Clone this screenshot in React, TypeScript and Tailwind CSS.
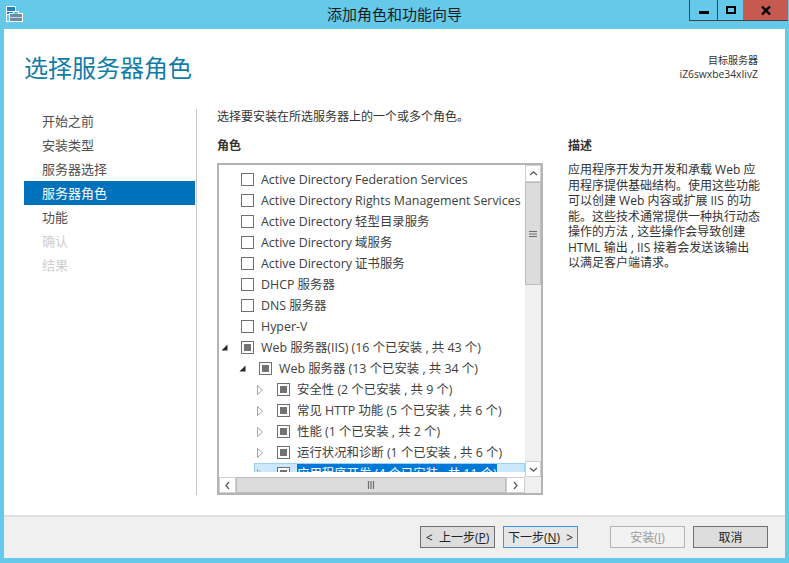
import React from 'react';

const NAV = [
  { label: '开始之前', state: 'normal' },
  { label: '安装类型', state: 'normal' },
  { label: '服务器选择', state: 'normal' },
  { label: '服务器角色', state: 'active' },
  { label: '功能', state: 'normal' },
  { label: '确认', state: 'disabled' },
  { label: '结果', state: 'disabled' },
];

type Role = { label: string; level: 0 | 1 | 2; mark?: boolean; arrow?: 'open' | 'closed'; selected?: boolean };

const ROLES: Role[] = [
  { label: 'Active Directory Federation Services', level: 0 },
  { label: 'Active Directory Rights Management Services', level: 0 },
  { label: 'Active Directory 轻型目录服务', level: 0 },
  { label: 'Active Directory 域服务', level: 0 },
  { label: 'Active Directory 证书服务', level: 0 },
  { label: 'DHCP 服务器', level: 0 },
  { label: 'DNS 服务器', level: 0 },
  { label: 'Hyper-V', level: 0 },
  { label: 'Web 服务器(IIS) (16 个已安装 , 共 43 个)', level: 0, mark: true, arrow: 'open' },
  { label: 'Web 服务器 (13 个已安装 , 共 34 个)', level: 1, mark: true, arrow: 'open' },
  { label: '安全性 (2 个已安装 , 共 9 个)', level: 2, mark: true, arrow: 'closed' },
  { label: '常见 HTTP 功能 (5 个已安装 , 共 6 个)', level: 2, mark: true, arrow: 'closed' },
  { label: '性能 (1 个已安装 , 共 2 个)', level: 2, mark: true, arrow: 'closed' },
  { label: '运行状况和诊断 (1 个已安装 , 共 6 个)', level: 2, mark: true, arrow: 'closed' },
  { label: '应用程序开发 (4 个已安装 , 共 11 个)', level: 2, mark: true, arrow: 'closed', selected: true },
];

function ServerIcon() {
  return (
    <svg width="17" height="16" viewBox="0 0 17 16" className="shrink-0">
      <rect x="0" y="0" width="10" height="16" fill="#ffffff" />
      <rect x="1" y="1" width="8" height="4" fill="#1b7fc4" />
      <rect x="1" y="6" width="8" height="2" fill="#1b7fc4" />
      <rect x="1" y="9" width="2" height="6" fill="#65c9ea" />
      <rect x="3" y="7" width="14" height="9" fill="#ffffff" />
      <rect x="7" y="5" width="6" height="3" fill="#ffffff" />
      <rect x="8" y="6" width="4" height="2" fill="#65c9ea" />
      <rect x="4" y="8" width="12" height="7" fill="#6d8ba5" />
      <rect x="4" y="11" width="12" height="1" fill="#c9d5de" />
    </svg>
  );
}

function TreeArrow({ kind }: { kind: 'open' | 'closed' }) {
  if (kind === 'open') {
    return (
      <svg width="7" height="7" viewBox="0 0 7 7">
        <path d="M6.5 0.5V6.5H0.5Z" fill="#262626" />
      </svg>
    );
  }
  return (
    <svg width="6" height="10" viewBox="0 0 6 10">
      <path d="M0.5 0.5L5.5 5L0.5 9.5Z" fill="#ffffff" stroke="#a6a6a6" />
    </svg>
  );
}

function RoleRow({ role }: { role: Role }) {
  const pad = role.level === 0 ? 'pl-[2px]' : role.level === 1 ? 'pl-[20px]' : 'pl-[38px]';
  return (
    <div className={`relative flex h-[21px] shrink-0 items-center whitespace-nowrap ${pad}`}>
      {role.selected && <div className="absolute inset-y-0 left-[35px] right-0 border border-[#99d1ff] bg-[#cce8ff]" />}
      <span className="relative flex w-[20px] shrink-0 items-center justify-start">
        {role.arrow && <TreeArrow kind={role.arrow} />}
      </span>
      <span className="relative flex h-[13px] w-[13px] shrink-0 items-center justify-center border border-[#707070] bg-white">
        {role.mark && <span className="h-[7px] w-[7px] bg-[#737373]" />}
      </span>
      <span
        className={`relative ml-[7px] leading-[19px] ${role.selected ? 'bg-[#0078d7] text-white' : 'text-[#404040]'}`}
      >
        {role.label}
      </span>
    </div>
  );
}

function ScrollButton({ children, className }: { children: React.ReactNode; className: string }) {
  return <div className={`flex shrink-0 items-center justify-center border border-[#d0d0d0] bg-white ${className}`}>{children}</div>;
}

function Chevron({ d }: { d: string }) {
  return (
    <svg width="9" height="9" viewBox="0 0 9 9">
      <path d={d} fill="none" stroke="#606060" strokeWidth="1.4" />
    </svg>
  );
}

// three-line grip on the scrollbar thumbs
function Grip({ vertical }: { vertical?: boolean }) {
  return (
    <svg width="8" height="8" viewBox="0 0 8 8">
      <path d={vertical ? 'M0 1.5H8M0 4H8M0 6.5H8' : 'M1.5 0V8M4 0V8M6.5 0V8'} stroke="#6e6e6e" strokeWidth="1.2" />
    </svg>
  );
}

function WizardButton({ children, variant }: { children: React.ReactNode; variant: 'normal' | 'focus' | 'disabled' }) {
  const style =
    variant === 'focus'
      ? 'border-[#3c96e8] bg-[#e6e6e6] text-[#222222]'
      : variant === 'disabled'
        ? 'border-[#b4b4b4] bg-[#f2f2f2] text-[#9a9a9a]'
        : 'border-[#707070] bg-[#dddddd] text-[#222222]';
  return <div className={`flex h-[22px] w-[75px] items-center justify-center whitespace-pre border pt-[1px] text-[12px] ${style}`}>{children}</div>;
}

export default function App() {
  return (
    <div
      className="flex h-[563px] w-[789px] flex-col overflow-hidden bg-[#65c9ea] text-[12px] text-[#333333]"
      style={{ fontFamily: '"Open Sans", "Noto Sans CJK SC", sans-serif' }}
    >
      {/* title bar */}
      <div className="relative flex h-[29px] shrink-0 items-center justify-center">
        <div className="absolute left-[6px] top-[6px]">
          <ServerIcon />
        </div>
        <span className="mt-[-1px] text-[15px] text-[#1c1c1c]">添加角色和功能向导</span>
        <div className="absolute right-[1px] top-0 flex h-[21px]">
          <div className="flex w-[28px] items-center justify-center border-b border-l border-[#3c4248] pt-[5px]">
            <span className="h-[3px] w-[10px] bg-black" />
          </div>
          <div className="flex w-[26px] items-center justify-center border-b border-l border-[#3c4248]">
            <span className="h-[8px] w-[10px] border-2 border-black" />
          </div>
          <div className="flex w-[45px] items-center justify-center border-b border-[#3c4248] bg-[#c75a50]">
            <svg width="10" height="9" viewBox="0 0 10 9">
              <path d="M1 0.5L9 8.5M9 0.5L1 8.5" stroke="#000000" strokeWidth="2.4" />
            </svg>
          </div>
        </div>
      </div>

      <div className="mx-[4px] flex h-[529px] shrink-0 flex-col bg-white">
        {/* header */}
        <div className="flex h-[80px] shrink-0 items-start justify-between pl-[20px] pr-[27px]">
          <h1 className="mt-[20px] text-[24px] leading-[38px] text-[#0f7ca8]">选择服务器角色</h1>
          <div className="mt-[24px] text-right text-[10px] leading-[14px] text-[#333333]">
            <div>目标服务器</div>
            <div className="text-[10.3px]">iZ6swxbe34xIivZ</div>
          </div>
        </div>

        <div className="flex h-[386px] shrink-0">
          {/* sidebar */}
          <div className="ml-[20px] w-[171px] shrink-0">
            {NAV.map((item) => (
              <div
                key={item.label}
                className={`flex h-[24px] items-center pl-[18px] pt-[2px] text-[13px] ${
                  item.state === 'active'
                    ? 'bg-[#0072bc] text-white'
                    : item.state === 'disabled'
                      ? 'text-[#cfcfcf]'
                      : 'text-[#505050]'
                }`}
              >
                {item.label}
              </div>
            ))}
          </div>
          <div className="ml-[1px] w-px shrink-0 bg-[#c8c8c8]" />

          {/* roles column */}
          <div className="ml-[20px] flex w-[326px] shrink-0 flex-col">
            <p className="flex h-[14px] items-center pt-[1px] text-[12px] text-[#333333]">选择要安装在所选服务器上的一个或多个角色。</p>
            <p className="mt-[15px] flex h-[14px] items-center pt-[1px] text-[12px] font-bold text-[#333333]">角色</p>
            <div className="mt-[11px] flex h-[332px] flex-col border-2 border-[#b4b4b4] text-[12.4px]">
              <div className="flex h-[312px] shrink-0">
                <div className="flex h-[307px] flex-1 flex-col overflow-hidden pt-[4px]">
                  {ROLES.map((role) => (
                    <RoleRow key={role.label} role={role} />
                  ))}
                </div>
                <div className="flex w-[16px] shrink-0 flex-col bg-[#f0f0f0]">
                  <ScrollButton className="h-[17px]">
                    <Chevron d="M1 6L4.5 3L8 6" />
                  </ScrollButton>
                  <div className="flex h-[103px] shrink-0 items-center justify-center border border-[#bdbdbd] bg-[#dcdcdc]">
                    <Grip vertical />
                  </div>
                  <div className="flex-1" />
                  <ScrollButton className="h-[16px]">
                    <Chevron d="M1 3L4.5 6L8 3" />
                  </ScrollButton>
                </div>
              </div>
              <div className="flex h-[16px] shrink-0 bg-[#f0f0f0]">
                <ScrollButton className="w-[17px]">
                  <Chevron d="M6 1L3 4.5L6 8" />
                </ScrollButton>
                <div className="flex w-[270px] shrink-0 items-center justify-center border border-[#bdbdbd] bg-[#dcdcdc]">
                  <Grip />
                </div>
                <ScrollButton className="w-[19px]">
                  <Chevron d="M3 1L6 4.5L3 8" />
                </ScrollButton>
              </div>
            </div>
          </div>

          {/* description column */}
          <div className="ml-[25px] w-[192px] shrink-0 pt-[29px]">
            <p className="flex h-[14px] items-center pt-[1px] font-bold">描述</p>
            <p className="mt-[10px] text-[12px] leading-[15.5px] text-[#333333]">
              应用程序开发为开发和承载 Web 应用程序提供基础结构。使用这些功能可以创建 Web 内容或扩展 IIS 的功能。这些技术通常提供一种执行动态操作的方法 , 这些操作会导致创建 HTML 输出 , IIS 接着会发送该输出以满足客户端请求。
            </p>
          </div>
        </div>

        {/* footer */}
        <div className="mt-[20px] flex h-[43px] flex-1 items-start gap-[8px] border-t-2 border-[#e0e0e0] bg-[#f0f0f0] pl-[416px] pt-[9px]">
          <WizardButton variant="normal">
            {'<  上一步('}<span className="underline">P</span>)
          </WizardButton>
          <WizardButton variant="focus">
            下一步(<span className="underline">N</span>{')  >'}
          </WizardButton>
          <div className="ml-[24px] flex gap-[8px]">
            <WizardButton variant="disabled">
              安装(<span className="underline">I</span>)
            </WizardButton>
            <WizardButton variant="normal">取消</WizardButton>
          </div>
        </div>
      </div>
    </div>
  );
}
